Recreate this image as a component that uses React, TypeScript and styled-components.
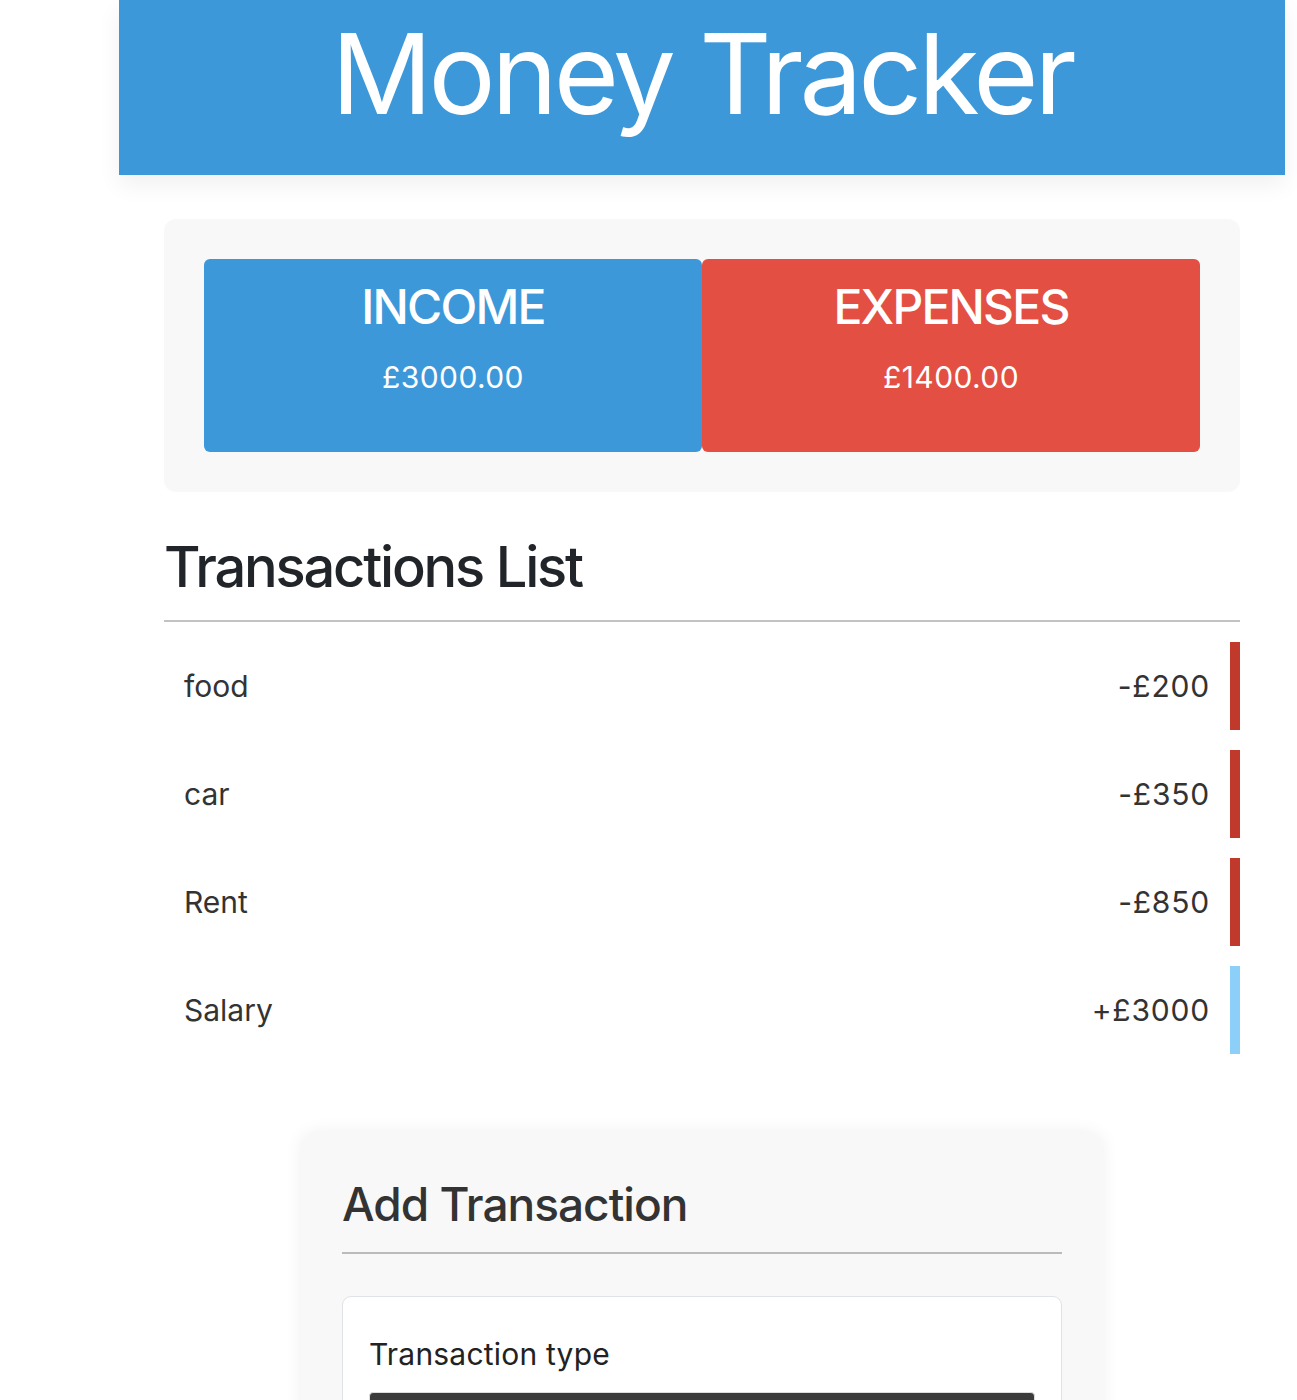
import * as React from 'react';
import styled, {createGlobalStyle} from 'styled-components';

const GlobalStyle = createGlobalStyle`
  html, body {
    margin: 0;
    padding: 0;
    background: #fff;
    font-family: Inter, "Noto Sans", "Liberation Sans", sans-serif;
  }

  * {
    box-sizing: border-box;
  }
`;

const Page = styled.div`
  width: 1166px;
  margin-left: 119px;
`;

const Header = styled.header`
  background-color: #3d98d9;
  box-shadow: 0 10px 22px rgba(0, 0, 0, 0.06);
  padding: 17px 0 46px;
  text-align: center;
`;

const Title = styled.h1`
  margin: 0;
  color: #fff;
  font-size: 112px;
  line-height: 112px;
  font-weight: 400;
  letter-spacing: -4px;
`;

const Main = styled.main`
  padding: 44px 45px 0;
`;

const Summary = styled.section`
  display: flex;
  background-color: #f8f8f8;
  border-radius: 12px;
  padding: 40px;
`;

const SummaryBox = styled.div<{$tone: 'income' | 'expense'}>`
  flex: 1;
  height: 193px;
  border-radius: 6px;
  background-color: ${p => (p.$tone === 'income' ? '#3d98d9' : '#e44f43')};
  color: #fff;
  text-align: center;
  padding-top: 24px;
`;

const SummaryLabel = styled.h2`
  margin: 0;
  font-size: 48px;
  line-height: 48px;
  font-weight: 500;
  letter-spacing: -1.8px;
`;

const SummaryAmount = styled.p`
  margin: 32px 0 0;
  font-size: 30px;
  line-height: 29px;
  font-weight: 400;
  letter-spacing: 0.4px;
`;

const SectionTitle = styled.h2`
  margin: 47px 0 0;
  padding-bottom: 25px;
  border-bottom: 2px solid #c2c2c2;
  color: #212529;
  font-size: 56px;
  line-height: 56px;
  font-weight: 500;
  letter-spacing: -2.2px;
`;

const List = styled.ul`
  list-style: none;
  margin: 20px 0 0;
  padding: 0;
  display: flex;
  flex-direction: column;
  gap: 20px;
`;

const Row = styled.li<{$kind: 'minus' | 'plus'}>`
  display: flex;
  align-items: center;
  justify-content: space-between;
  height: 88px;
  padding: 0 20px 0 20px;
  border-right: 10px solid ${p => (p.$kind === 'minus' ? '#c0392b' : '#8ccff8')};
  color: #333;
  font-size: 30px;
`;

const RowAmount = styled.span`
  letter-spacing: 0.8px;
`;

const FormCard = styled.section`
  width: 800px;
  margin: 79px auto 0;
  padding: 48px 40px 0;
  background-color: #f8f8f8;
  border-radius: 14px;
  box-shadow: 0 0 18px rgba(0, 0, 0, 0.07);
  height: 300px;
`;

const FormTitle = styled.h3`
  margin: 0;
  padding-bottom: 25px;
  border-bottom: 2px solid #bbb;
  color: #333;
  font-size: 46px;
  line-height: 46px;
  font-weight: 500;
  letter-spacing: -1px;
`;

const Field = styled.div`
  margin-top: 42px;
  background: #fff;
  border: 1px solid #dfe2e6;
  border-radius: 9px;
  padding: 42px 26px 30px;
`;

const Label = styled.label`
  display: block;
  color: #222;
  font-size: 30px;
  line-height: 30px;
  letter-spacing: 0.2px;
`;

const Select = styled.div`
  margin-top: 23px;
  height: 48px;
  background-color: #3b3b3b;
  border: 1px solid #ddd;
  border-radius: 4px;
`;

const transactions = [
  {name: 'food', amount: -200},
  {name: 'car', amount: -350},
  {name: 'Rent', amount: -850},
  {name: 'Salary', amount: 3000},
];

export default function App() {
  return (
    <>
      <GlobalStyle />
      <Page>
        <Header>
          <Title>Money Tracker</Title>
        </Header>
        <Main>
          <Summary>
            <SummaryBox $tone='income'>
              <SummaryLabel>INCOME</SummaryLabel>
              <SummaryAmount>£3000.00</SummaryAmount>
            </SummaryBox>
            <SummaryBox $tone='expense'>
              <SummaryLabel>EXPENSES</SummaryLabel>
              <SummaryAmount>£1400.00</SummaryAmount>
            </SummaryBox>
          </Summary>

          <SectionTitle>Transactions List</SectionTitle>
          <List>
            {transactions.map(t => (
              <Row key={t.name} $kind={t.amount < 0 ? 'minus' : 'plus'}>
                <span>{t.name}</span>
                <RowAmount>{t.amount < 0 ? `-£${-t.amount}` : `+£${t.amount}`}</RowAmount>
              </Row>
            ))}
          </List>

          <FormCard>
            <FormTitle>Add Transaction</FormTitle>
            <Field>
              <Label>Transaction type</Label>
              <Select />
            </Field>
          </FormCard>
        </Main>
      </Page>
    </>
  );
}
